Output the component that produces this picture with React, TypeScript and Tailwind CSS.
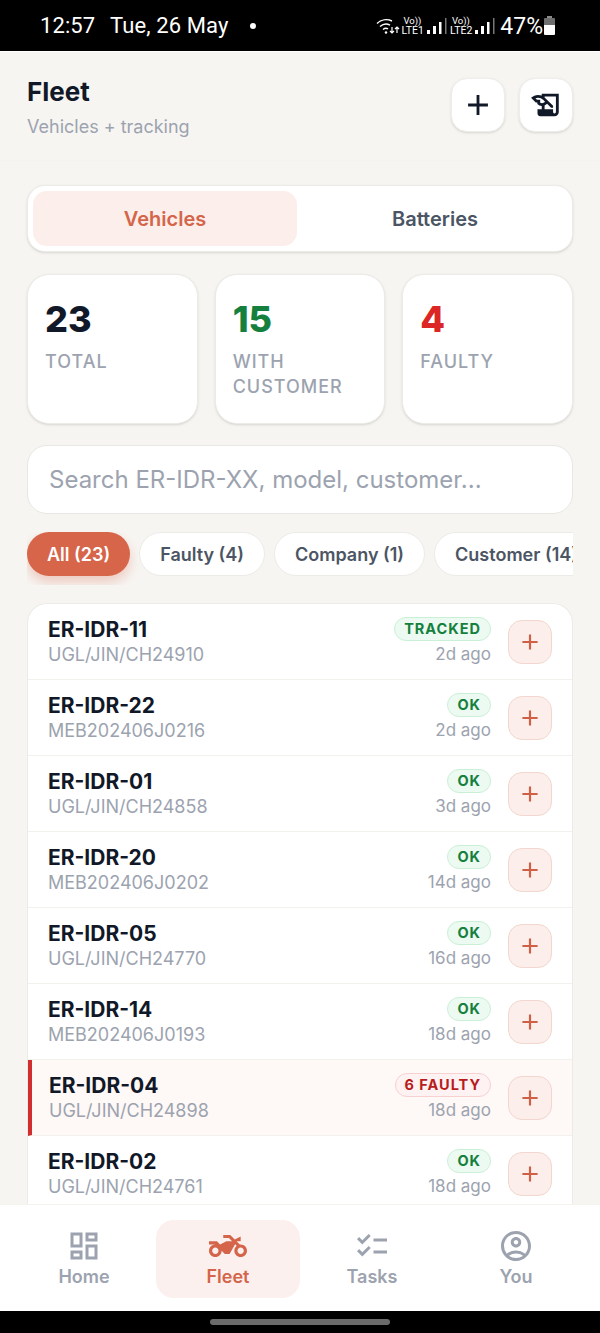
import React from "react";
import {
  MdAdd,
  MdOutlineDashboard,
  MdTwoWheeler,
  MdChecklist,
  MdOutlineAccountCircle,
  MdOutlineHistoryEdu,
} from "react-icons/md";

const font = { fontFamily: "Inter, 'Noto Sans', sans-serif" };

type Row = { id: string; sub: string; badge: string; kind: "ok" | "tracked" | "faulty"; time: string };

const rows: Row[] = [
  { id: "ER-IDR-11", sub: "UGL/JIN/CH24910", badge: "TRACKED", kind: "tracked", time: "2d ago" },
  { id: "ER-IDR-22", sub: "MEB202406J0216", badge: "OK", kind: "ok", time: "2d ago" },
  { id: "ER-IDR-01", sub: "UGL/JIN/CH24858", badge: "OK", kind: "ok", time: "3d ago" },
  { id: "ER-IDR-20", sub: "MEB202406J0202", badge: "OK", kind: "ok", time: "14d ago" },
  { id: "ER-IDR-05", sub: "UGL/JIN/CH24770", badge: "OK", kind: "ok", time: "16d ago" },
  { id: "ER-IDR-14", sub: "MEB202406J0193", badge: "OK", kind: "ok", time: "18d ago" },
  { id: "ER-IDR-04", sub: "UGL/JIN/CH24898", badge: "6 FAULTY", kind: "faulty", time: "18d ago" },
  { id: "ER-IDR-02", sub: "UGL/JIN/CH24761", badge: "OK", kind: "ok", time: "18d ago" },
];

function Signal() {
  return (
    <svg width="24" height="18" viewBox="0 0 24 18" className="block">
      <rect x="2" y="13" width="3" height="4" fill="#fff" />
      <rect x="8" y="9" width="3" height="8" fill="#fff" />
      <rect x="14" y="5" width="2.5" height="12" fill="#fff" />
      <rect x="20" y="1" width="1.5" height="16" fill="#777" />
    </svg>
  );
}

function Wifi() {
  return (
    <svg width="24" height="18" viewBox="0 0 24 18" fill="none" className="block">
      <path d="M1 6.5C5 2.6 11 1.8 16 4" stroke="#fff" strokeWidth="1.4" />
      <path d="M4 9.5c3-2.6 7-3 10-1.4" stroke="#fff" strokeWidth="1.4" />
      <path d="M7 12.5c1.6-1.3 3.6-1.4 5-.6" stroke="#fff" strokeWidth="1.4" />
      <circle cx="10" cy="15.5" r="1.2" fill="#fff" />
      <path d="M16 10v6m-2-2 2 2 2-2M21 16v-6m-2 2 2-2 2 2" stroke="#fff" strokeWidth="1.2" />
    </svg>
  );
}

function Sim({ n }: { n: string }) {
  return (
    <div className="flex flex-col items-start text-white text-[9.5px] leading-[10px] font-normal">
      <span className="pl-[2px]">Vo))</span>
      <span className="text-[10.5px]">{n}</span>
    </div>
  );
}

function StatusBar() {
  return (
    <div
      className="h-[51px] bg-black text-white flex items-center pl-[40px] pr-[45px] shrink-0"
      style={{ fontFamily: "Roboto, sans-serif" }}
    >
      <span className="text-[22px] leading-none tracking-[0.1px] w-[70px] pt-[1px]">12:57</span>
      <span className="text-[22px] leading-none tracking-[0.1px] w-[140px] pt-[1px]">Tue, 26 May</span>
      <span className="w-[6px] h-[6px] rounded-full bg-white" />
      <div className="ml-auto flex items-center">
        <Wifi />
        <div className="ml-[2px]"><Sim n="LTE1" /></div>
        <div className="ml-[1px]"><Signal /></div>
        <div className="ml-[1px]"><Sim n="LTE2" /></div>
        <div className="ml-[1px]"><Signal /></div>
        <span className="text-[23px] leading-none ml-[3px] pt-[1px]">47%</span>
        <svg width="11" height="19" viewBox="0 0 11 19" className="block ml-[1px]">
          <rect x="3" y="0" width="5" height="2" fill="#8a8a8a" />
          <path d="M0 3a1 1 0 0 1 1-1h9a1 1 0 0 1 1 1v6H0z" fill="#6f6f6f" />
          <path d="M0 9h11v9a1 1 0 0 1-1 1H1a1 1 0 0 1-1-1z" fill="#fff" />
        </svg>
      </div>
    </div>
  );
}

function Header() {
  return (
    <div className="h-[109px] shrink-0 flex items-start justify-between pl-[27px] pr-[27px] pt-[26px] border-b border-[#f4f2ee]">
      <div>
        <div className="text-[26px] leading-[28px] font-bold text-[#111827] mt-0">Fleet</div>
        <div className="text-[18px] leading-[24px] text-[#9ca3af] mt-[9px]">Vehicles + tracking</div>
      </div>
      <div className="flex gap-[14px]">
        <button className="w-[54px] h-[54px] rounded-[16px] bg-white border border-[#efedea] flex items-center justify-center text-[#111827] shadow-sm">
          <MdAdd size={34} />
        </button>
        <button className="w-[54px] h-[54px] rounded-[16px] bg-white border border-[#efedea] flex items-center justify-center text-[#111827] shadow-sm">
          <MdOutlineHistoryEdu size={34} />
        </button>
      </div>
    </div>
  );
}

function Tabs() {
  return (
    <div className="mx-[27px] mt-[24px] h-[67px] rounded-[18px] bg-white border border-[#edebe7] shadow-sm p-[5px] flex gap-[6px]">
      <div className="flex-1 rounded-[14px] bg-[#fbeeeb] text-[#d4654a] text-[20px] font-semibold flex items-center justify-center">
        Vehicles
      </div>
      <div className="flex-1 rounded-[14px] text-[#4b5563] text-[20px] font-semibold flex items-center justify-center">
        Batteries
      </div>
    </div>
  );
}

function Stat({ value, label, color }: { value: string; label: string; color: string }) {
  return (
    <div className="h-[150px] rounded-[22px] bg-white border border-[#edebe7] shadow-sm pl-[17px] pr-[8px] pt-[22px]">
      <div className={`text-[36px] leading-[44px] font-extrabold ${color}`}>{value}</div>
      <div className="text-[18px] leading-[25px] font-medium tracking-[1px] text-[#9ca3af] mt-[8px]">{label}</div>
    </div>
  );
}

function Chip({ label, active }: { label: string; active?: boolean }) {
  return (
    <div
      className={
        active
          ? "shrink-0 h-[44px] px-[20px] rounded-full bg-[#d6654a] text-white text-[18px] font-semibold flex items-center shadow-[0_6px_12px_rgba(214,101,74,0.3)]"
          : "shrink-0 h-[44px] px-[20px] rounded-full bg-white border border-[#edebe7] text-[#4b5563] text-[18px] font-semibold flex items-center"
      }
    >
      {label}
    </div>
  );
}

function Badge({ kind, text }: { kind: Row["kind"]; text: string }) {
  const cls =
    kind === "faulty"
      ? "bg-[#fef2f2] border-[#f8d0d0] text-[#b91c1c]"
      : "bg-[#ecfaf1] border-[#c9f0d7] text-[#15803d]";
  return (
    <span className={`inline-flex h-[24px] items-center px-[9px] rounded-full border text-[14.5px] font-bold tracking-[1px] ${cls}`}>
      {text}
    </span>
  );
}

function VehicleRow({ row }: { row: Row }) {
  const faulty = row.kind === "faulty";
  return (
    <div
      className={
        faulty
          ? "h-[76px] shrink-0 flex items-center pr-[20px] pl-[17px] border-l-[4px] border-l-[#d12f2f] border-b border-b-[#f3f1ee] bg-[#fef8f7]"
          : "h-[76px] shrink-0 flex items-center pr-[20px] pl-[20px] border-b border-b-[#f3f1ee]"
      }
    >
      <div className="flex-1 min-w-0">
        <div className="text-[21px] leading-[26px] font-bold text-[#111827]">{row.id}</div>
        <div className="text-[18px] leading-[24px] text-[#9ca3af]">{row.sub}</div>
      </div>
      <div className="flex flex-col items-end">
        <Badge kind={row.kind} text={row.badge} />
        <div className="text-[17px] leading-[24px] text-[#9ca3af] mt-[1px]">{row.time}</div>
      </div>
      <button className="ml-[17px] w-[44px] h-[44px] rounded-[14px] bg-[#fbeeeb] border border-[#f3d6cf] flex items-center justify-center text-[#cf5f45]">
        <MdAdd size={26} />
      </button>
    </div>
  );
}

function NavItem({ icon, label, active }: { icon: React.ReactNode; label: string; active?: boolean }) {
  return (
    <div
      className={
        active
          ? "w-[144px] h-[78px] rounded-[18px] bg-[#fbf0ed] text-[#d4654a] flex flex-col items-center justify-center"
          : "w-[144px] h-[78px] rounded-[18px] text-[#9ca3af] flex flex-col items-center justify-center"
      }
    >
      <div className="h-[34px] flex items-center justify-center">{icon}</div>
      <div className="text-[18px] leading-[24px] font-semibold mt-[2px]">{label}</div>
    </div>
  );
}

export default function App() {
  return (
    <div className="w-[600px] h-[1333px] flex flex-col overflow-hidden bg-[#f7f5f2]" style={font}>
      <StatusBar />
      <div className="h-[1px] bg-white shrink-0" />
      <Header />
      <div className="flex-1 min-h-0 flex flex-col overflow-hidden">
        <Tabs />
        <div className="mx-[27px] mt-[22px] grid grid-cols-3 gap-[17px]">
          <Stat value="23" label="TOTAL" color="text-[#111827]" />
          <Stat value="15" label="WITH CUSTOMER" color="text-[#15803d]" />
          <Stat value="4" label="FAULTY" color="text-[#dc2626]" />
        </div>
        <div className="mx-[27px] mt-[21px] h-[69px] rounded-[20px] bg-white border border-[#e9e7e3] flex items-center pl-[21px] text-[24px] text-[#9ca3af]">
          Search ER-IDR-XX, model, customer...
        </div>
        <div className="mx-[27px] mt-[18px] pb-[9px] flex gap-[9px] overflow-hidden">
          <Chip label="All (23)" active />
          <Chip label="Faulty (4)" />
          <Chip label="Company (1)" />
          <Chip label="Customer (14)" />
        </div>
        <div className="mx-[27px] mt-[18px] flex-1 min-h-0 rounded-t-[20px] bg-white border border-b-0 border-[#edebe7] flex flex-col overflow-hidden">
          {rows.map((r) => (
            <VehicleRow key={r.id} row={r} />
          ))}
        </div>
      </div>
      <div className="h-[107px] shrink-0 bg-white flex items-center justify-center border-t border-[#f5f3f0] pt-[1px]">
        <NavItem icon={<MdOutlineDashboard size={36} />} label="Home" />
        <NavItem icon={<MdTwoWheeler size={38} />} label="Fleet" active />
        <NavItem icon={<MdChecklist size={36} />} label="Tasks" />
        <NavItem icon={<MdOutlineAccountCircle size={36} />} label="You" />
      </div>
      <div className="h-[22px] shrink-0 bg-black flex items-center justify-center">
        <div className="w-[180px] h-[6px] rounded-full bg-[#6b6b6b]" />
      </div>
    </div>
  );
}
